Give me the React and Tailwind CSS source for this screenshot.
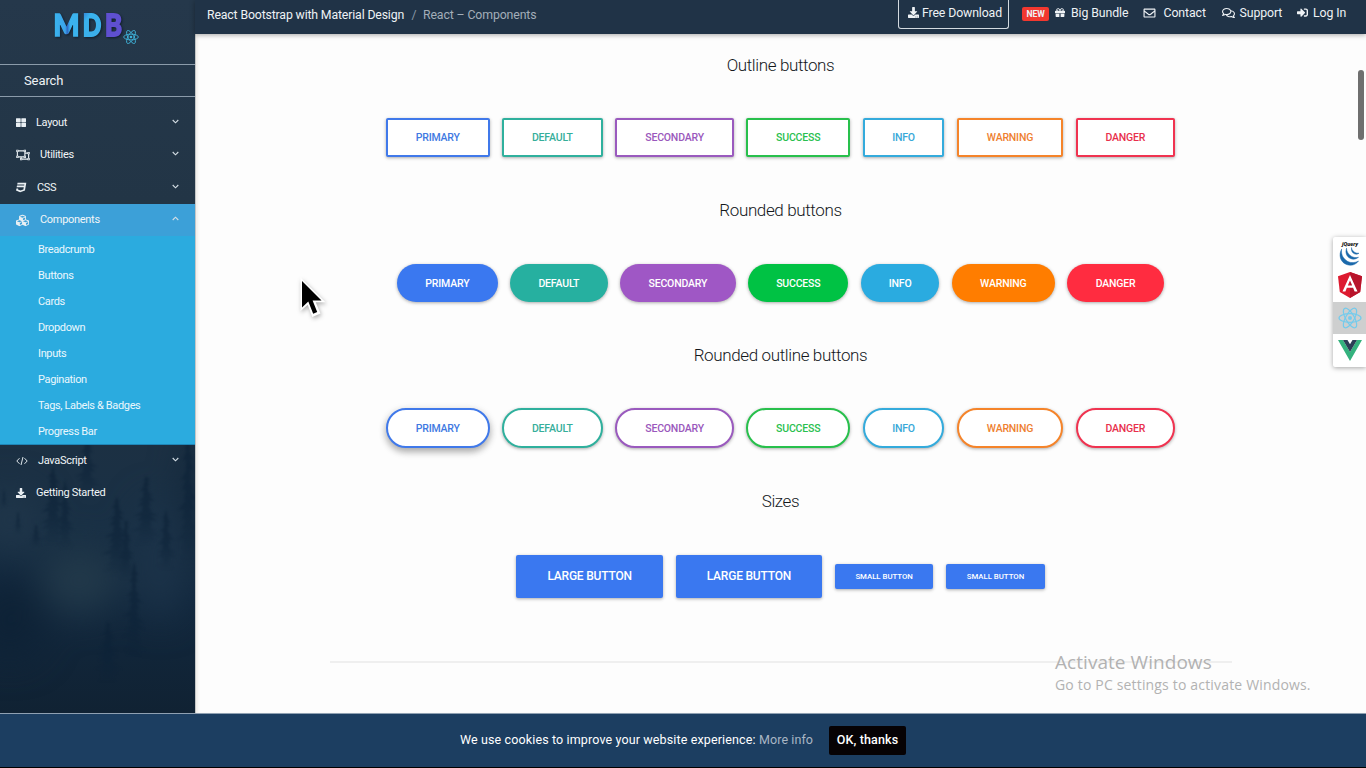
import React from "react";
import { FaThLarge, FaRegObjectUngroup, FaCss3, FaCubes, FaDownload, FaGift, FaRegEnvelope, FaRegComments, FaSignInAlt } from "react-icons/fa";

function Atom({ className, color = "#3fb4dc", sw = 1.3 }) {
  return (
    <svg className={className} viewBox="0 0 24 24" fill="none" stroke={color} strokeWidth={sw}>
      <ellipse cx="12" cy="12" rx="11" ry="4.3" />
      <ellipse cx="12" cy="12" rx="11" ry="4.3" transform="rotate(60 12 12)" />
      <ellipse cx="12" cy="12" rx="11" ry="4.3" transform="rotate(120 12 12)" />
      <circle cx="12" cy="12" r="2" fill={color} stroke="none" />
    </svg>
  );
}

function Chevron({ up }) {
  return (
    <svg className="h-[5px] w-[7px]" viewBox="0 0 7 5" fill="none" stroke="#d5dee5" strokeWidth="1.1">
      <path d={up ? "M0.7 4 3.5 1.2 6.3 4" : "M0.7 1 3.5 3.8 6.3 1"} />
    </svg>
  );
}

function Logo() {
  return (
    <svg className="h-[44px] w-[86px] overflow-visible drop-shadow-[1px_1px_1px_rgba(8,18,30,0.7)]" viewBox="0 0 86 44" fontFamily="Lato, sans-serif" fontWeight="900" fontSize="30.5">
      <defs>
        <linearGradient id="lm" x1="0" y1="0" x2="1" y2="0">
          <stop offset="0" stopColor="#39b5ef" />
          <stop offset=".45" stopColor="#3ca4ea" />
          <stop offset=".53" stopColor="#2f68c4" />
          <stop offset=".64" stopColor="#3bb4ef" />
          <stop offset="1" stopColor="#3ab2ec" />
        </linearGradient>
        <linearGradient id="ld" x1="0" y1="0" x2=".7" y2="1">
          <stop offset="0" stopColor="#2f66c8" />
          <stop offset=".35" stopColor="#39b2ed" />
          <stop offset="1" stopColor="#3caeea" />
        </linearGradient>
      </defs>
      <text x="-0.5" y="28" fill="url(#lm)" stroke="url(#lm)" strokeWidth="1.6" textLength="26" lengthAdjust="spacingAndGlyphs">M</text>
      <text x="28.8" y="28" fill="url(#ld)" stroke="url(#ld)" strokeWidth="1.8" textLength="18.5" lengthAdjust="spacingAndGlyphs">D</text>
      <text x="51" y="28" fill="#5f50d0" stroke="#5f50d0" strokeWidth="1.8" textLength="17" lengthAdjust="spacingAndGlyphs">B</text>
    </svg>
  );
}

const trees = [
  [87, 434, 28, 66], [53, 466, 30, 80], [117, 497, 32, 80], [146, 476, 30, 70],
  [134, 562, 24, 95], [108, 622, 28, 60], [188, 420, 22, 140], [4, 490, 8, 18], [18, 512, 10, 22], [36, 525, 14, 22], [166, 510, 22, 60], [65, 480, 20, 70], [126, 520, 20, 60],
];

function treePath(x, y, w, h) {
  const n = 14;
  let l = "";
  let r = "";
  for (let i = 1; i <= n; i++) {
    const base = (w / 2) * Math.min(1, 0.2 + (1.1 * i) / n);
    const a = base * (0.7 + 0.3 * Math.sin(i * 2.3 + x));
    const b = base * (0.7 + 0.3 * Math.cos(i * 1.7 + y));
    const yy = y + (h * i) / n;
    l += ` L${x - a} ${yy} L${x - a * 0.35} ${yy - 0.5}`;
    r = ` L${x + b * 0.35} ${yy - 0.5} L${x + b} ${yy}` + r;
  }
  return `M${x} ${y}${l}${r} Z`;
}

function Forest() {
  return (
    <svg className="absolute inset-0 h-full w-full" viewBox="0 0 195 713" preserveAspectRatio="none">
      <defs>
        <linearGradient id="sky" x1="0" y1="0" x2="0" y2="1">
          <stop offset="0" stopColor="#25384b" />
          <stop offset=".28" stopColor="#223546" />
          <stop offset=".62" stopColor="#1c3043" />
          <stop offset=".74" stopColor="#193045" />
          <stop offset=".84" stopColor="#12283e" />
          <stop offset="1" stopColor="#102233" />
        </linearGradient>
        <linearGradient id="tree" x1="0" y1="0" x2="0" y2="1">
          <stop offset="0" stopColor="#0c2136" />
          <stop offset=".6" stopColor="#0c2238" stopOpacity=".8" />
          <stop offset="1" stopColor="#0c2238" stopOpacity="0" />
        </linearGradient>
        <filter id="b1" x="-100%" y="-100%" width="300%" height="300%" colorInterpolationFilters="sRGB"><feGaussianBlur stdDeviation="18" /></filter>
        <filter id="b2" x="-20%" y="-20%" width="140%" height="140%" colorInterpolationFilters="sRGB"><feGaussianBlur stdDeviation="0.8" /></filter>
      </defs>
      <rect width="195" height="713" fill="url(#sky)" />
      <g filter="url(#b1)">
        <ellipse cx="80" cy="580" rx="40" ry="34" fill="#22394a" />
        <ellipse cx="10" cy="520" rx="30" ry="30" fill="#20364a" />
        <ellipse cx="160" cy="560" rx="26" ry="60" fill="#1c3349" />
        <ellipse cx="10" cy="620" rx="34" ry="40" fill="#0e2236" />
        <ellipse cx="196" cy="500" rx="8" ry="70" fill="#0f2235" />
      </g>
      <g filter="url(#b2)" fill="url(#tree)" opacity=".62">
        {trees.map((t, i) => <path key={i} d={treePath(...t)} />)}
      </g>
    </svg>
  );
}

const sub = ["Breadcrumb", "Buttons", "Cards", "Dropdown", "Inputs", "Pagination", "Tags, Labels & Badges", "Progress Bar"];

function Item({ icon, label, chev, up, pad, cls = "" }) {
  return (
    <div className={"flex h-[32.5px] items-center pr-4 pl-4 text-[11px] tracking-[-0.3px] text-[#f1f5f7] " + cls}>
      <span className={"flex items-center text-[#e9eff3] " + pad}>{icon}</span>
      <span className="flex-1 pt-[0.6px]">{label}</span>
      {chev && <span className="pb-[3px]"><Chevron up={up} /></span>}
    </div>
  );
}

function CodeIcon() {
  return (
    <svg className="h-[10px] w-[12px]" viewBox="0 0 12 10" fill="none" stroke="#dfe7ec" strokeWidth="1">
      <path d="M3.5 2.2.8 5l2.7 2.8M8.5 2.2 11.2 5 8.5 7.800M7 1 5 9" />
    </svg>
  );
}

function Sidebar() {
  return (
    <aside className="relative h-full w-[195px] shrink-0 overflow-hidden bg-[#213446]">
      <Forest />
      <div className="relative flex h-full flex-col">
        <div className="flex h-[64px] items-start pt-[8px] pl-[54px]">
          <Logo />
          <Atom className="mt-[21px] -ml-[17px] h-4 w-4" />
        </div>
        <div className="flex h-[33px] items-center border-y border-[#8b9baa] pl-6 text-[13px] tracking-[-0.1px] text-[#eef2f5]">Search</div>
        <nav className="pt-[9.5px]">
          <Item icon={<FaThLarge className="h-[11px] w-[10px]" />} pad="w-5" label="Layout" chev />
          <Item icon={<FaRegObjectUngroup className="h-3 w-[14px]" />} pad="w-6" label="Utilities" chev />
          <Item icon={<FaCss3 className="h-[11px] w-[11px]" />} pad="w-[21px]" label="CSS" chev />
          <Item icon={<FaCubes className="h-[13px] w-[13px]" />} pad="w-6" label="Components" chev up cls="bg-[#3ca0d8]" />
          <div className="-mt-[0.5px] h-[208.5px] border-b border-[#1f86b8] bg-[#2babdf] pt-[0.5px]">
            {sub.map((s) => (
              <div key={s} className="flex h-[26px] items-center pt-[2px] pl-[38px] text-[11px] tracking-[-0.36px] text-[#eaf7fd]">{s}</div>
            ))}
          </div>
          <Item icon={<CodeIcon />} pad="w-[22px]" label="JavaScript" chev />
          <Item icon={<FaDownload className="h-[10px] w-[10px]" />} pad="w-5" label="Getting Started" />
        </nav>
      </div>
    </aside>
  );
}

function Navbar() {
  return (
    <header className="relative flex h-[33.5px] shrink-0 items-start justify-between bg-[#203347] pr-[19px] pl-3 text-[12.3px] text-[#eef2f5] shadow-[0_1px_5px_rgba(0,0,0,0.35)]">
      <div className="flex pt-[6px] leading-[18px]">
        <span className="w-[198px] tracking-[-0.15px] whitespace-nowrap">React Bootstrap with Material Design</span>
        <span className="w-[18px] text-center text-[#8a98a5]">/</span>
        <span className="tracking-[-0.12px] whitespace-nowrap text-[#a3aeb9]">React – Components</span>
      </div>
      <div className="flex h-[29px] items-start leading-[18px]">
        <div className="flex h-[29px] w-[111px] items-start rounded-b-[3px] border border-t-0 border-[#d3dae0] pt-1 pl-[9px]">
          <FaDownload className="mt-[3px] mr-[3px] h-[11px] w-[11px]" />
          <span className="tracking-[-0.12px] whitespace-nowrap">Free Download</span>
        </div>
        <div className="flex pt-[3px] tracking-[-0.09px]">
          <span className="mt-[4px] ml-[13px] flex h-[14px] w-[27px] items-center justify-center rounded-[2px] bg-[#f2382f] text-[8.6px] font-bold">NEW</span>
          <FaGift className="mt-[4px] ml-[6px] h-[11px] w-[10px]" />
          <span className="ml-[6px] w-[57px] pt-[0.6px] whitespace-nowrap">Big Bundle</span>
          <FaRegEnvelope className="mt-[4px] ml-[15px] h-[12px] w-[13px]" />
          <span className="ml-[7.5px] w-[43px] pt-[0.6px] whitespace-nowrap">Contact</span>
          <FaRegComments className="mt-[4px] ml-[15px] h-[12px] w-[13px]" />
          <span className="ml-[5px] w-[43px] pt-[0.6px] whitespace-nowrap">Support</span>
          <FaSignInAlt className="mt-[4px] ml-[14.5px] h-[11px] w-[11px]" />
          <span className="ml-[5px] w-[34px] pt-[0.6px] whitespace-nowrap">Log In</span>
        </div>
      </div>
    </header>
  );
}

const outline = [
  ["PRIMARY", "w-[103.5px] border-[#4079ea] text-[#4079e2]"],
  ["DEFAULT", "w-[100.7px] border-[#2fb09d] text-[#35ae9a]"],
  ["SECONDARY", "w-[118.7px] border-[#9a5abe] text-[#9a58bc]"],
  ["SUCCESS", "w-[103.7px] border-[#28c04c] text-[#2abf4f]"],
  ["INFO", "w-[81.8px] border-[#34abdc] text-[#38a8d8]"],
  ["WARNING", "w-[106.2px] border-[#f5842a] text-[#ee8030]"],
  ["DANGER", "w-[99.4px] border-[#f03350] text-[#e8304c]"],
];
const solid = [
  ["PRIMARY", "w-[100.4px] bg-[#3a78f0]"],
  ["DEFAULT", "w-[97.3px] bg-[#26b0a0]"],
  ["SECONDARY", "w-[115.3px] bg-[#9f57c5]"],
  ["SUCCESS", "w-[100.2px] bg-[#00c244]"],
  ["INFO", "w-[78.2px] bg-[#2aabe0]"],
  ["WARNING", "w-[102.7px] bg-[#ff7d00]"],
  ["DANGER", "w-[96.5px] bg-[#ff2c40]"],
];

const softShadow = "shadow-[0_1px_3px_rgba(0,0,0,0.22),0_1px_4px_rgba(0,0,0,0.12)]";
const liftShadow = "shadow-[0_4px_7px_rgba(0,0,0,0.26),0_2px_8px_rgba(0,0,0,0.13)]";

function Heading({ children, cls }) {
  return <h2 className={"text-center text-[17px] leading-6 font-light tracking-[-0.37px] text-[#14181c] " + cls}>{children}</h2>;
}

function OutlineRow({ round }) {
  return (
    <div className="flex justify-center gap-[12.5px]">
      {outline.map(([t, c], i) => (
        <button key={t} className={"flex items-center justify-center bg-white text-[10.5px] font-medium tracking-[-0.18px] " + (round ? "h-[40px] rounded-full border-2 pt-[1.2px] " : "h-[39px] rounded-[2px] border-2 ") + (round && i === 0 ? liftShadow : softShadow) + " " + c}>{t}</button>
      ))}
    </div>
  );
}

function Main() {
  return (
    <main className="flex-1">
      <Heading cls="pt-[19px]">Outline buttons</Heading>
      <div className="pt-[41.5px]"><OutlineRow /></div>
      <Heading cls="pt-[41px]">Rounded buttons</Heading>
      <div className="flex justify-center gap-[12.7px] pt-[42px]">
        {solid.map(([t, c]) => (
          <button key={t} className={"flex h-[37.5px] items-center justify-center rounded-full pt-[2px] text-[10.5px] font-medium tracking-[-0.18px] text-white " + softShadow + " " + c}>{t}</button>
        ))}
      </div>
      <Heading cls="pt-[41.5px]">Rounded outline buttons</Heading>
      <div className="pt-[41px]"><OutlineRow round /></div>
      <Heading cls="pt-[41px]">Sizes</Heading>
      <div className="flex h-[84px] items-center justify-center gap-[12.7px] pt-[43px]">
        {["a", "b"].map((k) => (
          <button key={k} className={"h-[43.5px] w-[146.6px] shrink-0 rounded-[2px] bg-[#3a78f0] pb-[1.5px] text-[12px] font-medium tracking-[-0.2px] text-white " + softShadow}>LARGE BUTTON</button>
        ))}
        {["c", "d"].map((k) => (
          <button key={k} className={"h-[25px] w-[98.6px] shrink-0 rounded-[2px] bg-[#3a78f0] text-[7.8px] font-medium text-white " + softShadow}>SMALL BUTTON</button>
        ))}
      </div>
      <div className="mt-[63.5px] ml-[135px] h-[2px] w-[902px] bg-[#efefef]" />
    </main>
  );
}

function Frameworks() {
  return (
    <div className="absolute top-[237px] right-0 flex w-[33px] flex-col overflow-hidden rounded-l-[2px] bg-white shadow-[0_1px_5px_rgba(0,0,0,0.35)]">
      <div className="flex h-[33px] items-center justify-center pl-px">
        <svg className="h-[30px] w-[26px]" viewBox="0 0 26 30" fill="none" stroke="#1b69ab" strokeLinecap="round">
          <text x="5" y="6.5" fontFamily="Roboto, sans-serif" fontSize="6" fontWeight="900" fontStyle="italic" fill="#111" stroke="none" textLength="16" lengthAdjust="spacingAndGlyphs">jQuery</text>
          <path d="M4.5 10.5c-3 5-1.5 12.5 5 15 5 1.8 9.5 0 12-3.5-4 2.2-9 2.3-12.5-.7-3.8-3-4.8-6.5-4.5-10.8z" fill="#1b69ab" strokeWidth=".5" />
          <path d="M9.5 9.500c-1.5 4 0 8 3.5 9.8 3 1.5 6 1 8.5-1-3 .7-6 .2-8.3-1.8-2.3-2-3.7-4.5-3.7-7z" fill="#1b69ab" strokeWidth=".5" />
          <path d="M14.5 9c-.5 3 1 5 3 5.8 1.7.7 3.2.4 4.5-.6-2 .1-3.600-.2-5.100-1.500-1.400-1.200-2.200-2.300-2.400-3.700z" fill="#1b69ab" strokeWidth=".5" />
        </svg>
      </div>
      <div className="flex h-8 items-center justify-center pb-[2px]">
        <svg className="h-[26px] w-6" viewBox="0 0 24 26">
          <path d="M12 0 24 4.2 22.2 20 12 26 1.8 20 0 4.2z" fill="#dd1b30" />
          <path d="M12 0 24 4.2 22.2 20 12 26z" fill="#b8142b" />
          <path d="M12 3 4.5 19.5h2.900l1.500-3.800h6.200l1.500 3.800h2.900zM12 8.500l2.200 5h-4.400z" fill="#fff" fillRule="evenodd" />
        </svg>
      </div>
      <div className="flex h-8 items-center justify-center bg-[#cecfcf] pl-px">
        <Atom className="h-6 w-6" color="#74cbec" sw={1.2} />
      </div>
      <div className="flex h-[33px] items-center justify-center pl-px">
        <svg className="h-[21px] w-6" viewBox="0 0 24 21">
          <path d="M0 0h5L12 12 19 0h5L12 21z" fill="#35b27e" />
          <path d="M5 0h4.500L12 4.300 14.500 0H19L12 12z" fill="#2c3e56" />
        </svg>
      </div>
    </div>
  );
}

export default function App() {
  return (
    <div className="relative flex h-[768px] w-[1366px] flex-col overflow-hidden bg-[#fdfdfd] font-['Roboto',sans-serif]">
      <div className="flex h-[713px]">
        <Sidebar />
        <div className="flex h-full flex-1 flex-col shadow-[inset_1px_0_0_#c4c6c6,inset_4px_0_3px_-1px_#f0eeea]">
          <Navbar />
          <Main />
        </div>
      </div>
      <footer className="flex h-[55px] items-center border-t border-b border-t-[#8fa0b2] border-b-black bg-[#1c3e61] pl-[460px] text-[12.5px] text-white">
        <span className="w-[299px] tracking-[0.13px] whitespace-nowrap">We use cookies to improve your website experience:</span>
        <span className="w-[70px] tracking-[0.08px] whitespace-nowrap text-[#a9b6c4]">More info</span>
        <button className="h-[29px] w-[77px] rounded-[2px] bg-[#060204] text-[12.5px] font-medium tracking-[0.15px] whitespace-nowrap">OK, thanks</button>
      </footer>

      <div className="absolute top-[70px] right-[2px] h-[70px] w-[6px] rounded-full bg-[#6f6f6f]" />
      <Frameworks />
      <svg className="absolute top-[275px] left-[296px] h-[48px] w-[36px] drop-shadow-[1px_2px_2px_rgba(0,0,0,0.3)]" viewBox="0 0 36 48">
        <path d="M4.5 2.5v33.5l7.2-6.2 4.6 12.3 8.2-3.5-4.8-11.3h9.8z" fill="#fff" />
        <path d="M6 6v26.5l6.3-6 4.900 12.300 4-1.800-4.600-11.400h8.900z" fill="#000" />
      </svg>
      <div className="absolute top-[650px] left-[1055px] font-['Open_Sans',sans-serif] whitespace-nowrap text-[#b2b2b2]">
        <div className="text-[19px] leading-[25px] tracking-[0.05px]">Activate Windows</div>
        <div className="text-[14px] leading-[20px] tracking-[0.17px]">Go to PC settings to activate Windows.</div>
      </div>
    </div>
  );
}
